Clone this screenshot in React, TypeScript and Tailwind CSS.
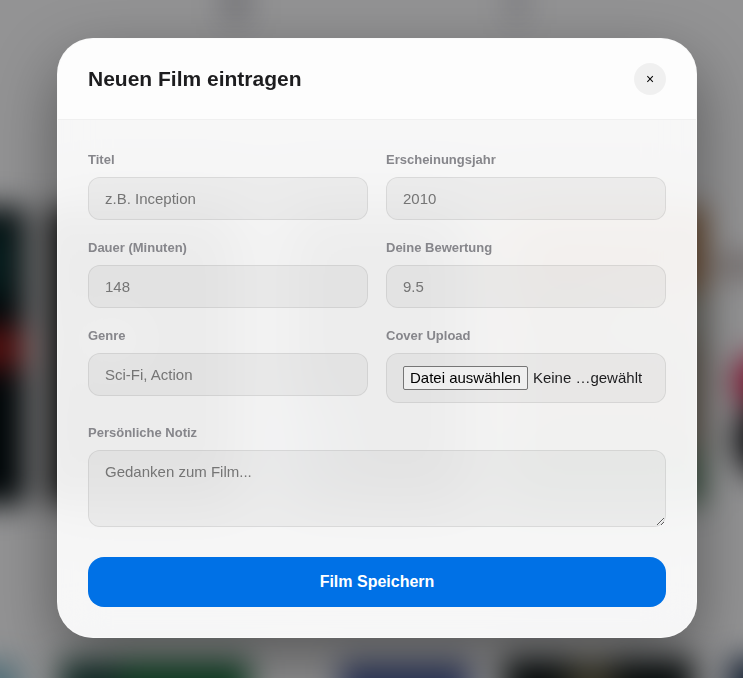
import { FormEvent, ReactNode, useState } from "react";

interface FieldProps {
  id: string;
  label: string;
  children: ReactNode;
}

interface TextField {
  id: string;
  label: string;
  placeholder: string;
}

const textFields: TextField[] = [
  { id: "title", label: "Titel", placeholder: "z.B. Inception" },
  { id: "year", label: "Erscheinungsjahr", placeholder: "2010" },
  { id: "duration", label: "Dauer (Minuten)", placeholder: "148" },
  { id: "rating", label: "Deine Bewertung", placeholder: "9.5" },
  { id: "genre", label: "Genre", placeholder: "Sci-Fi, Action" },
];

const inputClasses =
  "w-full px-4 py-3 text-[15px] leading-[17px] text-[#1d1d1f] placeholder:text-[#757575] bg-black/4 border border-black/8 rounded-xl outline-none focus:border-[#0071e3]";

const Field = ({ id, label, children }: FieldProps) => (
  <div className="flex flex-col items-start gap-2">
    <label
      htmlFor={id}
      className="text-[13px] leading-[19px] font-semibold text-[#86868b]"
    >
      {label}
    </label>
    {children}
  </div>
);

// The out-of-focus poster wall behind the dialog
const PosterWall = () => (
  <svg
    className="absolute inset-0 w-full h-full"
    viewBox="0 0 743 678"
    preserveAspectRatio="xMidYMid slice"
    aria-hidden="true"
  >
    <defs>
      <filter id="soft" x="-20%" y="-20%" width="140%" height="140%" colorInterpolationFilters="sRGB">
        <feGaussianBlur stdDeviation="15" />
      </filter>
    </defs>
    <g filter="url(#soft)">
      <rect x="-100" y="-100" width="943" height="878" fill="#f5f5f7" />
      <rect x="222" y="-20" width="28" height="44" fill="#c4c4ca" />
      <rect x="508" y="-20" width="18" height="44" fill="#ccccd2" />

      <rect x="-150" y="207" width="177" height="298" fill="#040d10" />
      <rect x="-150" y="225" width="162" height="70" fill="#0b3434" />
      <rect x="-150" y="328" width="177" height="40" fill="#8a1a1a" />

      <rect x="50" y="207" width="194" height="298" fill="#181818" />
      <rect x="90" y="320" width="50" height="40" fill="#a0a0a0" />

      <rect x="284" y="207" width="186" height="298" fill="#303030" />
      <rect x="280" y="400" width="60" height="90" fill="#5d7385" />

      <rect x="500" y="207" width="204" height="298" fill="#948674" />
      <rect x="500" y="207" width="204" height="90" fill="#a87040" />
      <rect x="600" y="290" width="104" height="50" fill="#a3a294" />
      <rect x="500" y="450" width="204" height="55" fill="#5d8265" />

      <rect x="716" y="256" width="60" height="20" fill="#b8aaa8" />
      <circle cx="762" cy="382" r="30" fill="#d02050" />
      <circle cx="778" cy="440" r="44" fill="#101014" />

      <rect x="-40" y="662" width="60" height="80" fill="#86b8c8" />
      <rect x="60" y="660" width="190" height="80" fill="#186a3c" />
      <rect x="60" y="662" width="60" height="80" fill="#204a44" />
      <rect x="340" y="662" width="130" height="80" fill="#4a5c98" />
      <rect x="504" y="658" width="190" height="80" fill="#101818" />
      <rect x="568" y="658" width="46" height="80" fill="#646048" />
      <rect x="728" y="658" width="80" height="80" fill="#283c58" />
    </g>
  </svg>
);

const App = () => {
  const [open, setOpen] = useState<boolean>(true);
  const [fileName, setFileName] = useState<string>("Keine …gewählt");

  const submitHandler = (event: FormEvent<HTMLFormElement>) => {
    event.preventDefault();
    setOpen(false);
  };

  return (
    <div className="relative min-h-screen overflow-hidden bg-[#f5f5f7] font-['Liberation_Sans',Arial,sans-serif]">
      <PosterWall />

      {open && (
        <div className="relative flex min-h-screen items-center justify-center bg-black/40 pl-[11px] pb-0.5">
          <div
            role="dialog"
            aria-labelledby="dialog-title"
            className="w-full max-w-[640px] overflow-hidden rounded-[36px] border border-white/40 bg-white/92 shadow-[0_24px_64px_rgba(0,0,0,0.4)] backdrop-blur-xl"
          >
            <header className="flex items-center justify-between border-b border-black/5 bg-white/80 px-[30px] py-6">
              <h2
                id="dialog-title"
                className="text-[21px] leading-8 font-bold text-[#1d1d1f]"
              >
                Neuen Film eintragen
              </h2>
              <button
                type="button"
                aria-label="Schließen"
                className="size-8 rounded-full bg-black/5 text-sm text-black"
                onClick={() => setOpen(false)}
              >
                ×
              </button>
            </header>

            <form className="p-[30px]" onSubmit={submitHandler}>
              <div className="grid grid-cols-2 gap-[18px]">
                {textFields.map(({ id, label, placeholder }) => (
                  <Field key={id} id={id} label={label}>
                    <input
                      id={id}
                      type="text"
                      placeholder={placeholder}
                      className={inputClasses}
                    />
                  </Field>
                ))}

                <Field id="cover" label="Cover Upload">
                  <div className="flex w-full items-baseline gap-[5px] rounded-xl border border-black/8 bg-black/4 px-4 py-3 text-[15px] leading-[22px] text-[#1d1d1f]">
                    <input
                      id="cover"
                      type="file"
                      className="sr-only"
                      onChange={(event) =>
                        setFileName(
                          event.target.files?.[0]?.name ?? "Keine …gewählt"
                        )
                      }
                    />
                    <label
                      htmlFor="cover"
                      className="shrink-0 rounded-xs border border-[#767676] bg-[#efefef] px-1.5 text-black"
                    >
                      Datei auswählen
                    </label>
                    <span className="truncate">{fileName}</span>
                  </div>
                </Field>
              </div>

              <div className="mt-5">
                <Field id="note" label="Persönliche Notiz">
                  <textarea
                    id="note"
                    rows={3}
                    placeholder="Gedanken zum Film..."
                    className={inputClasses}
                  />
                </Field>
              </div>

              <button
                type="submit"
                className="mt-[30px] h-[50px] w-full rounded-2xl bg-[#0071e6] text-base font-bold text-white"
              >
                Film Speichern
              </button>
            </form>
          </div>
        </div>
      )}
    </div>
  );
};

export default App;
